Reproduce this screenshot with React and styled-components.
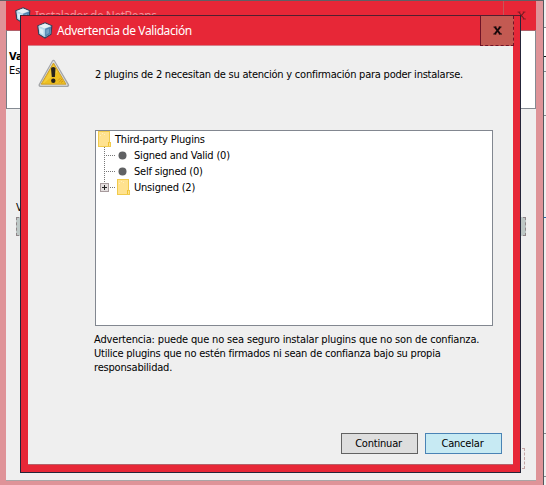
import React from "react";
import styled, { createGlobalStyle } from "styled-components";

const GlobalStyle = createGlobalStyle`
  *, *::before, *::after { box-sizing: border-box; }
  html, body { margin: 0; padding: 0; overflow: hidden; }
  svg { display: block; flex: none; }
`;

const UI_FONT = `"DejaVu Sans Condensed", "DejaVu Sans", sans-serif`;

const Screen = styled.div`
  position: relative;
  display: flex;
  width: 546px;
  height: 485px;
  overflow: hidden;
  background: #efefef;
  color: #000;
  font-family: ${UI_FONT};
  font-stretch: condensed;
  font-size: 11px;
  line-height: 14px;
`;

const ParentWindow = styled.div`
  display: flex;
  flex-direction: column;
  width: 544px;
  height: 485px;
  padding: 0 7px 0 6px;
  background: #df9398;
  border-top: 1px solid #5f6065;
  border-right: 1px solid #55565c;
`;

const ParentTitle = styled.div`
  display: flex;
  align-items: flex-start;
  height: 29px;
  flex: none;
  padding: 6px 0 0 9px;
  background: #e72737;
  color: #f58d96;
  font: 12px/15px "Noto Sans", sans-serif;
`;

const ParentTitleText = styled.span`
  flex: 1;
  margin: 1px 0 0 4px;
  white-space: pre;
  letter-spacing: -0.52px;
`;

const ParentClose = styled.span`
  display: flex;
  justify-content: center;
  width: 33px;
  height: 29px;
  margin-top: -6px;
  padding: 10px 0 0 2px;
  border-left: 1px solid #c5565a;
`;

const ParentHeader = styled.div`
  height: 79px;
  flex: none;
  padding: 19px 0 0 2px;
  background: #fff;
  border: 1px solid #858b93;
  border-top-color: #b0606a;
  border-left-color: #777c84;
`;

const ParentBody = styled.div`
  display: flex;
  flex-direction: column;
  flex: none;
  height: 372px;
  padding: 92px 10px 0 10px;
  background: #efefef;
  border-bottom: 1px solid #aaa4a5;
`;

const ProgressTrack = styled.div`
  height: 19px;
  margin-top: 2px;
  flex: none;
  background: #bdc7c5;
  border: 1px dashed #8f8588;
`;

const ParentButton = styled.div`
  width: 70px;
  height: 21px;
  margin: 212px 1px 0 auto;
  border: 1px dashed #c3a5a5;
`;

const SideStrip = styled.div`
  display: flex;
  flex-direction: column;
  width: 2px;
`;

const StripCell = styled.div`
  height: ${(p) => p.$h}px;
  flex: none;
  background: ${(p) => p.$bg || "#efefef"};
  border-bottom: 1px solid ${(p) => p.$line || "#85888d"};
`;

const Dialog = styled.div`
  position: absolute;
  left: 20px;
  top: 15px;
  width: 501px;
  height: 458px;
  display: flex;
  flex-direction: column;
  padding: 0 7px 7px;
  background: #e72737;
  border: 1px solid #252539;
  border-top-color: #51202f;
`;

const TitleBar = styled.div`
  display: flex;
  height: 29px;
  flex: none;
  padding-left: 9px;
  margin-right: -1px;
`;

const TitleIcon = styled.span`
  padding-top: 6px;
`;

const TitleText = styled.span`
  flex: 1;
  padding: 6px 0 0 4px;
  color: #fff;
  font: 12px/17px "Noto Sans", sans-serif;
  letter-spacing: -0.4px;
`;

const CloseButton = styled.button`
  display: flex;
  align-items: center;
  justify-content: center;
  width: 34px;
  height: 30px;
  padding: 0;
  background: #c35a52;
  border: 1px dashed #701326;
  border-width: 0 1px 1px;
  border-left-style: solid;
  position: relative;
`;

const Content = styled.div`
  display: flex;
  flex-direction: column;
  flex: 1;
  width: 485px;
  background: #efefef;
  border-top: 1px solid #d5808a;
  border-bottom: 1px solid #b56068;
`;

const MessageRow = styled.div`
  display: flex;
  height: 84px;
  flex: none;
  padding: 13px 0 0 10px;
`;

const Message = styled.p`
  margin: 9px 0 0 25px;
  white-space: nowrap;
`;

const TreeBox = styled.div`
  width: 398px;
  height: 196px;
  flex: none;
  margin-left: 67px;
  padding: 0 0 0 2px;
  background: #fff;
  border: 1px solid #828790;
  letter-spacing: -0.2px;
`;

const TreeRow = styled.div`
  display: flex;
  align-items: center;
  height: 16px;
`;

const TreeLabel = styled.span`
  margin-left: ${(p) => p.$gap}px;
  padding-top: 2px;
  white-space: nowrap;
`;

const Notice = styled.p`
  margin: 7px 0 0 66px;
  white-space: nowrap;
`;

const Line = styled.span`
  display: block;
  width: fit-content;
  letter-spacing: ${(p) => p.$ls || 0}px;
`;

const Actions = styled.div`
  display: flex;
  justify-content: flex-end;
  gap: 7px;
  margin: auto 11px 10px 0;
`;

const Button = styled.button`
  width: 77px;
  height: 21px;
  padding: 0 2px 0 0;
  color: #000;
  font: inherit;
  letter-spacing: -0.2px;
  background: ${(p) => (p.$primary ? "#c7eaf3" : "#dedede")};
  border: 1px solid ${(p) => (p.$primary ? "#4a83b5" : "#626262")};
`;

const CubeIcon = () => (
  <svg width="16" height="17" viewBox="0 0 16 17">
    <path d="M8 .8 14.8 3.8 14 12.2 8 16 1.8 12.2.8 3.8Z" fill="#a9c9df" stroke="#34425a" strokeWidth="1.2" />
    <path d="M8 1.5 14 4 7.6 6.4 1.5 4Z" fill="#e6f1f5" />
    <path d="M1.6 4.4 7.5 6.8V15L2.5 11.8Z" fill="#b9dcef" />
    <path d="M2.5 6.2 6.3 7.8V12.8L3 10.8Z" fill="#dceff7" />
    <path d="M8.2 6.8 14.2 4.5 13.4 11.7 8.2 15.1Z" fill="#4d83ae" />
    <path d="M9.2 7.8 12 6.7V11L9.2 12.8Z" fill="#74a4c8" />
  </svg>
);

const WarningIcon = () => (
  <svg width="32" height="30" viewBox="0 0 32 30">
    <path d="M15.5 2.5 29.5 26.2H2.2Z" fill="#a3a5a7" stroke="#a3a5a7" strokeWidth="3.4" strokeLinejoin="round" />
    <path d="M15.5 2.7 29 26H2.6Z" fill="#dcdddd" stroke="#dcdddd" strokeWidth="1.4" strokeLinejoin="round" />
    <path d="M15.5 4 28 25.2H3.2Z" fill="#edbf20" stroke="#c99b27" strokeWidth=".9" />
    <path d="M15.5 6 19.5 13 6.2 24H4.9Z" fill="#f7d54b" opacity=".6" />
    <path d="M20 21.5 22.5 19M21 23.5 24 20M23 23.5 25 22" stroke="#c9861c" strokeWidth=".8" />
    <path d="M13 9.6Q13 8 15.2 8T17.5 9.6L16.9 18H13.8Z" fill="#25211d" />
    <circle cx="15.3" cy="21.8" r="2.2" fill="#25211d" />
  </svg>
);

const CloseGlyph = ({ color, heavy }) => (
  <svg width="9" height="9" viewBox="0 0 9 9">
    <path d="M1.8 1 7.2 8M7.2 1 1.8 8" stroke={color} strokeWidth={heavy ? 2 : 1.1} fill="none" />
    <path d="M.5 1H3.5M5.7 1H8.5M.3 8H3.3M5.8 8H9" stroke={color} strokeWidth={heavy ? 1 : 0.7} />
  </svg>
);

const Folder = () => (
  <svg width="13" height="16" viewBox="0 0 13 16" shapeRendering="crispEdges">
    <path d="M0 0H12V11H13V16H0Z" fill="#f1cb4d" />
    <path d="M1 1H11V15H1Z" fill="#ffe28f" />
    <path d="M11 12H12V15H11Z" fill="#ffe28f" />
    <path d="M10 11H11V15H10Z" fill="#f1c431" />
    <path d="M2 4H3V5H2ZM4 2H5V3H4ZM6 3H7V4H6Z" fill="#fff0bd" />
  </svg>
);

const BranchLeaf = () => (
  <svg width="29" height="16" viewBox="0 0 29 16">
    <path d="M6.5 0V16" stroke="#777" strokeDasharray="1 1" shapeRendering="crispEdges" />
    <path d="M8 8.5H18" stroke="#777" strokeDasharray="1 1" shapeRendering="crispEdges" />
    <circle cx="24.5" cy="8.5" r="4" fill="#606163" />
  </svg>
);

const BranchFolder = () => (
  <svg width="19" height="16" viewBox="0 0 19 16" shapeRendering="crispEdges">
    <path d="M6.5 0V4" stroke="#777" strokeDasharray="1 1" />
    <path d="M12 8.5H17" stroke="#777" strokeDasharray="1 1" />
    <rect x="2.5" y="4.5" width="8" height="8" fill="#e4dfdf" stroke="#a79b9d" />
    <path d="M4 8.5H9M6.5 6V11" stroke="#222" />
  </svg>
);

export default function App() {
  return (
    <>
      <GlobalStyle />
      <Screen>
        <ParentWindow>
          <ParentTitle>
            <CubeIcon />
            <ParentTitleText>Instalador de NetBeans</ParentTitleText>
            <ParentClose><CloseGlyph color="#711b22" /></ParentClose>
          </ParentTitle>
          <ParentHeader>
            <Line as="b">Va</Line>
            <Line>Es</Line>
          </ParentHeader>
          <ParentBody>
            <Line>V</Line>
            <ProgressTrack />
            <ParentButton />
          </ParentBody>
        </ParentWindow>
        <SideStrip>
          <StripCell $h={28} />
          <StripCell $h={29} $bg="#fff" $line="#111" />
          <StripCell $h={15} />
          <StripCell $h={44} />
          <StripCell $h={102} $line="#2465a5" />
          <StripCell $h={216} />
          <StripCell $h={43} />
        </SideStrip>
        <Dialog>
          <TitleBar>
            <TitleIcon><CubeIcon /></TitleIcon>
            <TitleText>Advertencia de Validación</TitleText>
            <CloseButton aria-label="Cerrar"><CloseGlyph color="#16080a" heavy /></CloseButton>
          </TitleBar>
          <Content>
            <MessageRow>
              <WarningIcon />
              <Message>
                <Line $ls={-0.23}>2 plugins de 2 necesitan de su atención y confirmación para poder instalarse.</Line>
              </Message>
            </MessageRow>
            <TreeBox>
              <TreeRow><Folder /><TreeLabel $gap={4}>Third-party Plugins</TreeLabel></TreeRow>
              <TreeRow><BranchLeaf /><TreeLabel $gap={7}>Signed and Valid (0)</TreeLabel></TreeRow>
              <TreeRow><BranchLeaf /><TreeLabel $gap={7}>Self signed (0)</TreeLabel></TreeRow>
              <TreeRow><BranchFolder /><Folder /><TreeLabel $gap={4}>Unsigned (2)</TreeLabel></TreeRow>
            </TreeBox>
            <Notice>
              <Line $ls={-0.16}>Advertencia: puede que no sea seguro instalar plugins que no son de confianza.</Line>
              <Line $ls={-0.22}>Utilice plugins que no estén firmados ni sean de confianza bajo su propia</Line>
              <Line $ls={-0.19}>responsabilidad.</Line>
            </Notice>
            <Actions>
              <Button>Continuar</Button>
              <Button $primary>Cancelar</Button>
            </Actions>
          </Content>
        </Dialog>
      </Screen>
    </>
  );
}
